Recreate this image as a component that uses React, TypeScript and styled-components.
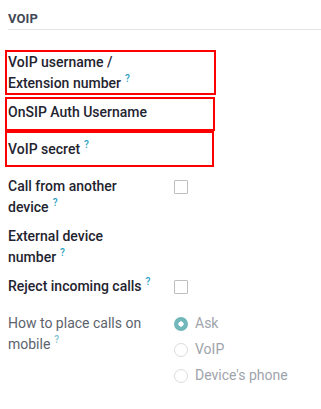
import React from "react";
import styled, { createGlobalStyle } from "styled-components";

const GlobalStyle = createGlobalStyle`
  html, body {
    margin: 0;
    padding: 0;
    background: #ffffff;
  }
  body {
    font-family: Roboto, "Noto Sans", "Liberation Sans", sans-serif;
    -webkit-font-smoothing: antialiased;
  }
`;

const Page = styled.div`
  padding-left: 8px;
  overflow: hidden;
`;

const SectionTitle = styled.div`
  margin-top: 10px;
  padding-bottom: 1px;
  border-bottom: 1px solid #e3e4e6;
  font-size: 13px;
  line-height: 18px;
  font-weight: 700;
  color: #434955;
  letter-spacing: 0.1px;
`;

const Form = styled.div`
  margin-top: 22px;
  display: flex;
  flex-direction: column;
`;

type Mark = { top: number; bottom: number; width: number };

const Row = styled.div<{ $mark?: Mark }>`
  position: relative;
  display: grid;
  grid-template-columns: 156px 1fr;
  column-gap: 10px;
  min-height: 29px;
  margin-bottom: 8px;

  ${({ $mark }) =>
    $mark &&
    `
    &::after {
      content: "";
      position: absolute;
      left: -3px;
      top: ${$mark.top}px;
      bottom: ${$mark.bottom}px;
      width: ${$mark.width}px;
      border: 2px solid #ff0000;
      box-sizing: border-box;
      pointer-events: none;
    }
  `}
`;

const Label = styled.div<{ $muted?: boolean }>`
  font-size: 14px;
  line-height: 21px;
  font-weight: ${({ $muted }) => ($muted ? 400 : 500)};
  color: ${({ $muted }) => ($muted ? "#5c636d" : "#1f2430")};
`;

// little "?" tooltip marker after a label
const Help = styled.span<{ $muted?: boolean }>`
  position: relative;
  top: -6px;
  padding: 0 4px;
  font-size: 10px;
  line-height: 10px;
  font-weight: 500;
  color: ${({ $muted }) => ($muted ? "#7cc2d6" : "#2a9fc2")};
`;

const Field = styled.div`
  display: flex;
  flex-direction: column;
`;

const Checkbox = styled.span`
  display: block;
  margin-top: 4px;
  width: 14px;
  height: 14px;
  box-sizing: border-box;
  border: 1px solid #bdbfc3;
  border-radius: 1px;
  background: #ffffff;
`;

const RadioItem = styled.div`
  display: flex;
  align-items: flex-start;
  gap: 7px;
  height: 26px;
  font-size: 14px;
  line-height: 21px;
  color: #9ea3ab;
`;

const RadioDot = styled.span<{ $checked?: boolean }>`
  flex: none;
  margin-top: 4px;
  width: 14px;
  height: 14px;
  box-sizing: border-box;
  border-radius: 50%;
  ${({ $checked }) =>
    $checked
      ? `background: radial-gradient(circle, #ffffff 0 2.4px, #72b8bb 2.9px);`
      : `border: 1px solid #d9dbde; background: #ffffff;`}
`;

const options = ["Ask", "VoIP", "Device's phone"];

export default function App() {
  return (
    <Page>
      <GlobalStyle />
      <SectionTitle>VOIP</SectionTitle>
      <Form>
        <Row $mark={{ top: -2, bottom: -1, width: 211 }}>
          <Label>
            VoIP username / Extension number<Help>?</Help>
          </Label>
          <Field />
        </Row>
        <Row $mark={{ top: -5, bottom: 0, width: 210 }}>
          <Label>OnSIP Auth Username</Label>
          <Field />
        </Row>
        <Row $mark={{ top: -8, bottom: 1, width: 209 }}>
          <Label>
            VoIP secret<Help>?</Help>
          </Label>
          <Field />
        </Row>
        <Row>
          <Label>
            Call from another device<Help>?</Help>
          </Label>
          <Field>
            <Checkbox />
          </Field>
        </Row>
        <Row>
          <Label>
            External device number<Help>?</Help>
          </Label>
          <Field />
        </Row>
        <Row>
          <Label>
            Reject incoming calls<Help>?</Help>
          </Label>
          <Field>
            <Checkbox />
          </Field>
        </Row>
        <Row>
          <Label $muted>
            How to place calls on mobile<Help $muted>?</Help>
          </Label>
          <Field>
            {options.map((o, i) => (
              <RadioItem key={o}>
                <RadioDot $checked={i === 0} />
                {o}
              </RadioItem>
            ))}
          </Field>
        </Row>
      </Form>
    </Page>
  );
}
